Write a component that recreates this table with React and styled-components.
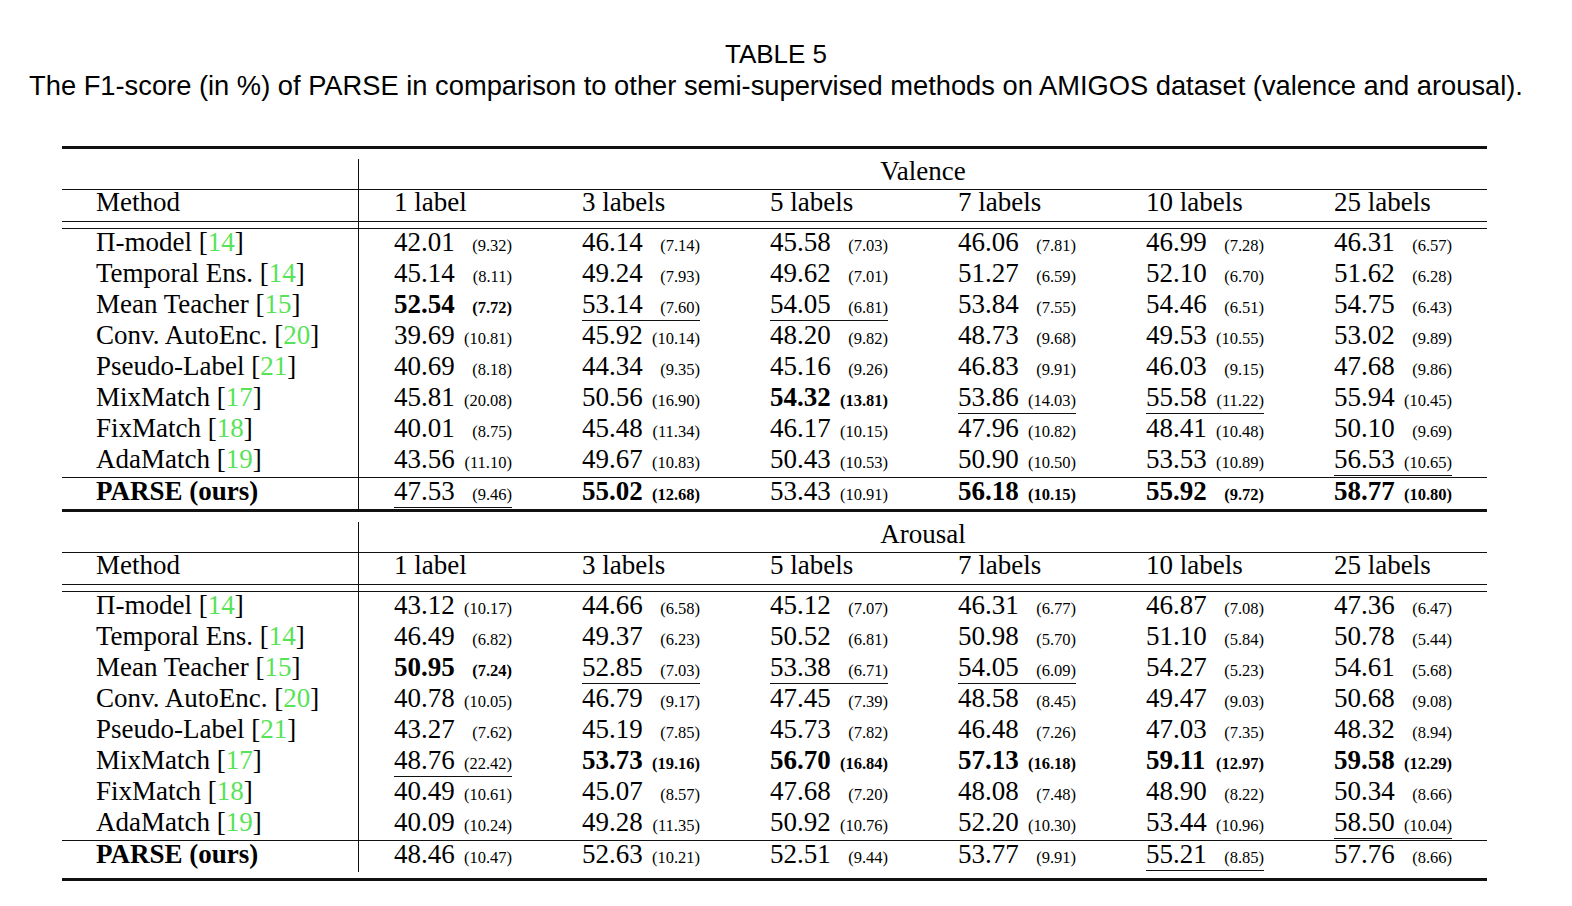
import React from "react";
import styled, { createGlobalStyle } from "styled-components";

const INK = "#111";
const CITE = "#57e357";

const GlobalStyle = createGlobalStyle`
  body {
    margin: 0;
    background: #fff;
    color: #000;
  }
`;

// "value std flags" — b = bold (best), u = underlined (second best)
const valence = [
  ["Π-model", 14, ["42.01 9.32", "46.14 7.14", "45.58 7.03", "46.06 7.81", "46.99 7.28", "46.31 6.57"]],
  ["Temporal Ens.", 14, ["45.14 8.11", "49.24 7.93", "49.62 7.01", "51.27 6.59", "52.10 6.70", "51.62 6.28"]],
  ["Mean Teacher", 15, ["52.54 7.72 b", "53.14 7.60 u", "54.05 6.81 u", "53.84 7.55", "54.46 6.51", "54.75 6.43"]],
  ["Conv. AutoEnc.", 20, ["39.69 10.81", "45.92 10.14", "48.20 9.82", "48.73 9.68", "49.53 10.55", "53.02 9.89"]],
  ["Pseudo-Label", 21, ["40.69 8.18", "44.34 9.35", "45.16 9.26", "46.83 9.91", "46.03 9.15", "47.68 9.86"]],
  ["MixMatch", 17, ["45.81 20.08", "50.56 16.90", "54.32 13.81 b", "53.86 14.03 u", "55.58 11.22 u", "55.94 10.45"]],
  ["FixMatch", 18, ["40.01 8.75", "45.48 11.34", "46.17 10.15", "47.96 10.82", "48.41 10.48", "50.10 9.69"]],
  ["AdaMatch", 19, ["43.56 11.10", "49.67 10.83", "50.43 10.53", "50.90 10.50", "53.53 10.89", "56.53 10.65 u"]],
];
const valenceOurs = ["47.53 9.46 u", "55.02 12.68 b", "53.43 10.91", "56.18 10.15 b", "55.92 9.72 b", "58.77 10.80 b"];

const arousal = [
  ["Π-model", 14, ["43.12 10.17", "44.66 6.58", "45.12 7.07", "46.31 6.77", "46.87 7.08", "47.36 6.47"]],
  ["Temporal Ens.", 14, ["46.49 6.82", "49.37 6.23", "50.52 6.81", "50.98 5.70", "51.10 5.84", "50.78 5.44"]],
  ["Mean Teacher", 15, ["50.95 7.24 b", "52.85 7.03 u", "53.38 6.71 u", "54.05 6.09 u", "54.27 5.23", "54.61 5.68"]],
  ["Conv. AutoEnc.", 20, ["40.78 10.05", "46.79 9.17", "47.45 7.39", "48.58 8.45", "49.47 9.03", "50.68 9.08"]],
  ["Pseudo-Label", 21, ["43.27 7.62", "45.19 7.85", "45.73 7.82", "46.48 7.26", "47.03 7.35", "48.32 8.94"]],
  ["MixMatch", 17, ["48.76 22.42 u", "53.73 19.16 b", "56.70 16.84 b", "57.13 16.18 b", "59.11 12.97 b", "59.58 12.29 b"]],
  ["FixMatch", 18, ["40.49 10.61", "45.07 8.57", "47.68 7.20", "48.08 7.48", "48.90 8.22", "50.34 8.66"]],
  ["AdaMatch", 19, ["40.09 10.24", "49.28 11.35", "50.92 10.76", "52.20 10.30", "53.44 10.96", "58.50 10.04 u"]],
];
const arousalOurs = ["48.46 10.47", "52.63 10.21", "52.51 9.44", "53.77 9.91", "55.21 8.85 u", "57.76 8.66"];

const labels = ["1 label", "3 labels", "5 labels", "7 labels", "10 labels", "25 labels"];
const colWidths = [297, 223, 188, 188, 188, 188, 153];

const Page = styled.div`
  padding-top: 39px;
  padding-bottom: 20px;
`;

const Caption = styled.div`
  width: 1552px;
  text-align: center;
  font-family: "Liberation Sans", Arial, sans-serif;
  font-size: ${({ $title }) => ($title ? 26 : 27.3)}px;
  line-height: 31px;
  color: #000;
`;

const Table = styled.table`
  margin: 45px 0 0 62px;
  width: 1425px;
  table-layout: fixed;
  border-collapse: separate;
  border-spacing: 0;
  font-family: "Liberation Serif", "Times New Roman", serif;
  font-size: 27px;
  line-height: 24px;
  color: #000;
`;

const Tr = styled.tr`
  & > td {
    padding: 0;
    vertical-align: top;
    border-top: ${({ $top }) => ($top ? `${$top}px solid ${INK}` : "none")};
    border-bottom: ${({ $bottom }) => ($bottom ? `${$bottom}px solid ${INK}` : "none")};
  }
`;

const MethodCell = styled.td`
  border-right: 1px solid ${INK};
  font-weight: ${({ $bold }) => ($bold ? 700 : 400)};
  white-space: nowrap;
`;

const MethodText = styled.div`
  height: 31px;
  padding-left: 34px;
  padding-top: ${({ $drop }) => ($drop ? 1 : 0)}px;
  box-sizing: border-box;
`;

const Spacer = styled.div`
  height: ${({ $h }) => $h}px;
`;

const GroupTitle = styled.div`
  height: 30px;
  text-align: center;
`;

const DataCell = styled.td`
  &:nth-child(2) {
    padding-left: 35px !important;
  }
`;

const HeadLabel = styled.div`
  height: 31px;
  white-space: nowrap;
`;

const Value = styled.div`
  display: flex;
  justify-content: space-between;
  align-items: baseline;
  width: 118px;
  height: 30px;
  padding-top: 1px;
  box-sizing: border-box;
  border-bottom: 1px solid ${({ $u }) => ($u ? INK : "transparent")};
  font-weight: ${({ $b }) => ($b ? 700 : 400)};
  white-space: nowrap;
`;

const Std = styled.span`
  font-size: 16.5px;
`;

const Cite = styled.span`
  color: ${CITE};
`;

const Cell = ({ v }) => {
  const [num, std, flag = ""] = v.split(" ");
  return (
    <DataCell>
      <Value $b={flag === "b"} $u={flag === "u"}>
        <span>{num}</span>
        <Std>({std})</Std>
      </Value>
    </DataCell>
  );
};

const Block = ({ title, rows, ours, last }) => (
  <tbody>
    <Tr $top={3}>
      <td colSpan={7}>
        <Spacer $h={10} />
      </td>
    </Tr>
    <Tr $bottom={1}>
      <MethodCell>
        <Spacer $h={30} />
      </MethodCell>
      <td colSpan={6}>
        <GroupTitle>{title}</GroupTitle>
      </td>
    </Tr>
    <Tr $bottom={1}>
      <MethodCell>
        <MethodText>Method</MethodText>
      </MethodCell>
      {labels.map((l) => (
        <DataCell key={l}>
          <HeadLabel>{l}</HeadLabel>
        </DataCell>
      ))}
    </Tr>
    <Tr $bottom={1}>
      <MethodCell>
        <Spacer $h={6} />
      </MethodCell>
      <td colSpan={6} />
    </Tr>
    {rows.map(([name, ref, vals]) => (
      <Tr key={name}>
        <MethodCell>
          <MethodText $drop>
            {name} [<Cite>{ref}</Cite>]
          </MethodText>
        </MethodCell>
        {vals.map((v, i) => (
          <Cell key={i} v={v} />
        ))}
      </Tr>
    ))}
    <Tr $top={1}>
      <MethodCell $bold>
        <MethodText $drop>PARSE (ours)</MethodText>
      </MethodCell>
      {ours.map((v, i) => (
        <Cell key={i} v={v} />
      ))}
    </Tr>
    {last && (
      <Tr $bottom={3}>
        <td colSpan={7}>
          <Spacer $h={6} />
        </td>
      </Tr>
    )}
  </tbody>
);

export default function App() {
  return (
    <>
      <GlobalStyle />
      <Page>
        <Caption $title>TABLE 5</Caption>
        <Caption>
          The F1-score (in %) of PARSE in comparison to other semi-supervised methods on AMIGOS dataset (valence and
          arousal).
        </Caption>
        <Table>
          <colgroup>
            {colWidths.map((w, i) => (
              <col key={i} style={{ width: w }} />
            ))}
          </colgroup>
          <Block title="Valence" rows={valence} ours={valenceOurs} />
          <Block title="Arousal" rows={arousal} ours={arousalOurs} last />
        </Table>
      </Page>
    </>
  );
}
